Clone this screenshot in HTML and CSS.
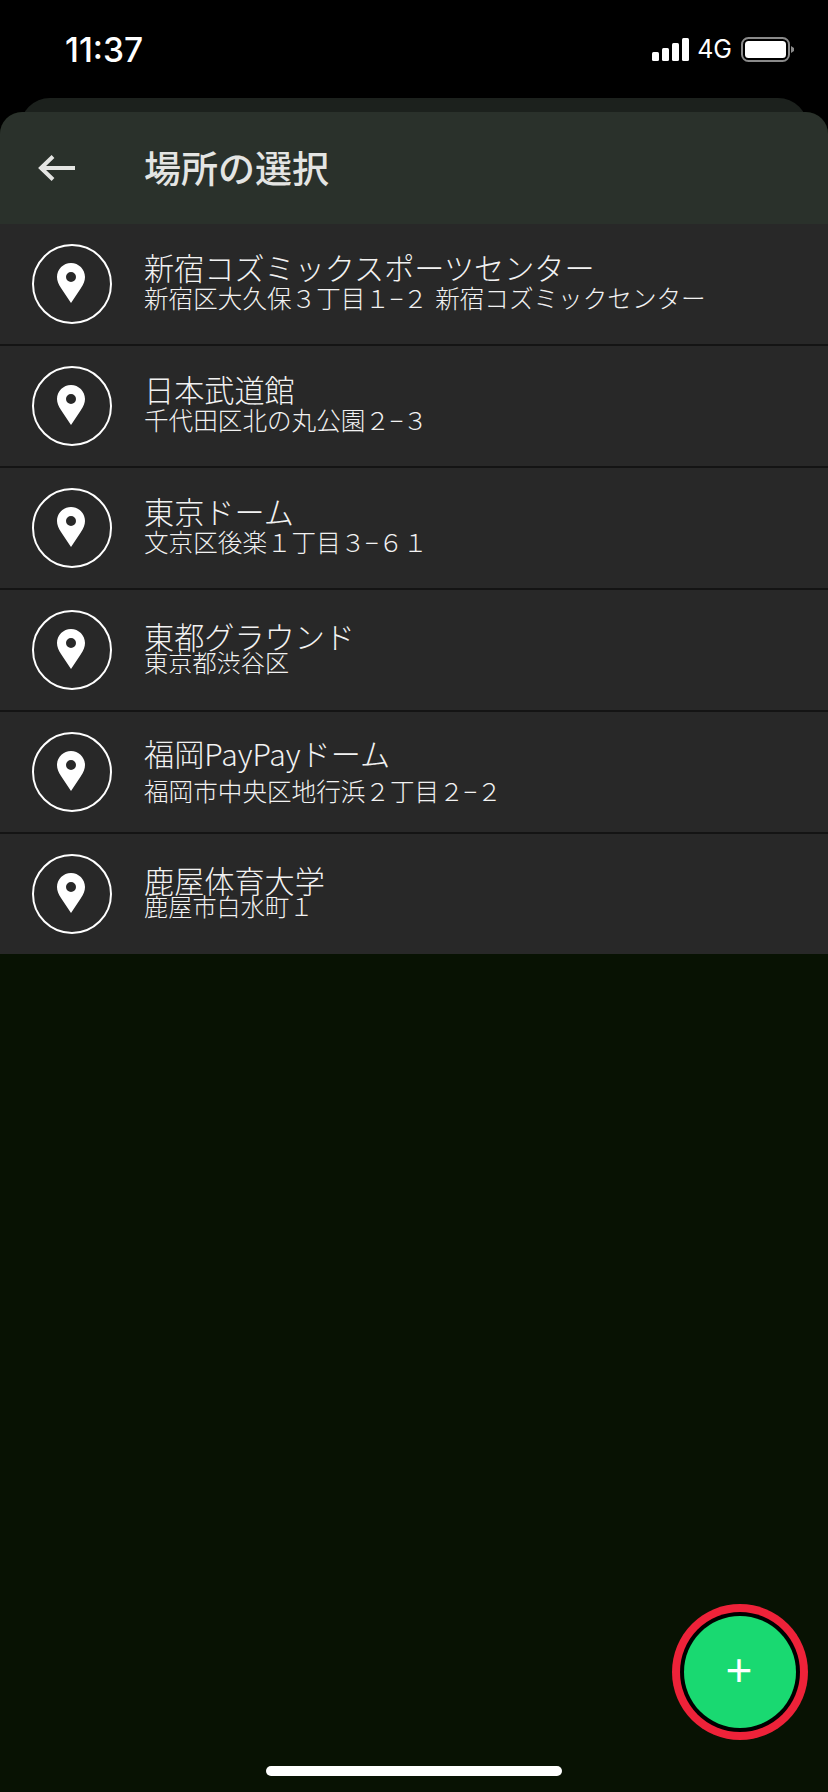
FILE: index.html
```html
<!DOCTYPE html>
<html lang="ja">
<head>
<meta charset="utf-8">
<title>場所の選択</title>
<link rel="stylesheet" href="styles.css">
</head>
<body>
<div class="screen">
  <div class="status">
    <span class="time">11:37</span>
    <div class="status-right">
      <svg class="signal" width="37" height="23" viewBox="0 0 37 23"><rect x="0" y="14" width="7" height="9" rx="1.5"/><rect x="10" y="10" width="7" height="13" rx="1.5"/><rect x="20" y="5" width="7" height="18" rx="1.5"/><rect x="30" y="0" width="7" height="23" rx="1.5"/></svg>
      <span class="net">4G</span>
      <svg class="battery" width="53" height="25" viewBox="0 0 53 25"><rect x="1" y="1" width="47" height="23" rx="6.5" fill="none" stroke="#8a8a8a" stroke-width="2"/><rect x="4" y="4" width="41" height="17" rx="3.5" fill="#fff"/><path d="M50 9 L53 11 V14 L50 16 Z" fill="#8a8a8a"/></svg>
    </div>
  </div>
  <div class="sheet-back">
    <div class="sheet">
      <header class="bar">
        <svg class="back" width="38" height="28" viewBox="0 0 38 28"><path d="M37 14H3M15 2.500 3 14l12 11.500" fill="none" stroke="#e4e5e3" stroke-width="4"/></svg>
        <h1 class="title">場所の選択</h1>
      </header>
      <ul class="list">
        <li class="row"><span class="pin"><svg width="30" height="40" viewBox="0 0 30 40"><path fill-rule="evenodd" d="M15 0C7.300 0 1 6.300 1 14c0 4 1.500 7 4 11l10 15 10-15c2.500-4 4-7 4-11C29 6.300 22.700 0 15 0Zm0 9a5 5 0 1 1 0 10 5 5 0 0 1 0-10Z" fill="#fff"/></svg></span><div class="info"><div class="name">新宿コズミックスポーツセンター</div><div class="addr">新宿区大久保３丁目１−２ 新宿コズミックセンター</div></div></li>
        <li class="row"><span class="pin"><svg width="30" height="40" viewBox="0 0 30 40"><path fill-rule="evenodd" d="M15 0C7.300 0 1 6.300 1 14c0 4 1.500 7 4 11l10 15 10-15c2.500-4 4-7 4-11C29 6.300 22.700 0 15 0Zm0 9a5 5 0 1 1 0 10 5 5 0 0 1 0-10Z" fill="#fff"/></svg></span><div class="info"><div class="name">日本武道館</div><div class="addr">千代田区北の丸公園２−３</div></div></li>
        <li class="row"><span class="pin"><svg width="30" height="40" viewBox="0 0 30 40"><path fill-rule="evenodd" d="M15 0C7.300 0 1 6.300 1 14c0 4 1.500 7 4 11l10 15 10-15c2.500-4 4-7 4-11C29 6.300 22.700 0 15 0Zm0 9a5 5 0 1 1 0 10 5 5 0 0 1 0-10Z" fill="#fff"/></svg></span><div class="info"><div class="name">東京ドーム</div><div class="addr">文京区後楽１丁目３−６１</div></div></li>
        <li class="row"><span class="pin"><svg width="30" height="40" viewBox="0 0 30 40"><path fill-rule="evenodd" d="M15 0C7.300 0 1 6.300 1 14c0 4 1.500 7 4 11l10 15 10-15c2.500-4 4-7 4-11C29 6.300 22.700 0 15 0Zm0 9a5 5 0 1 1 0 10 5 5 0 0 1 0-10Z" fill="#fff"/></svg></span><div class="info info-tight"><div class="name">東都グラウンド</div><div class="addr">東京都渋谷区</div></div></li>
        <li class="row"><span class="pin"><svg width="30" height="40" viewBox="0 0 30 40"><path fill-rule="evenodd" d="M15 0C7.300 0 1 6.300 1 14c0 4 1.500 7 4 11l10 15 10-15c2.500-4 4-7 4-11C29 6.300 22.700 0 15 0Zm0 9a5 5 0 1 1 0 10 5 5 0 0 1 0-10Z" fill="#fff"/></svg></span><div class="info info-wide"><div class="name">福岡PayPayドーム</div><div class="addr">福岡市中央区地行浜２丁目２−２</div></div></li>
        <li class="row"><span class="pin"><svg width="30" height="40" viewBox="0 0 30 40"><path fill-rule="evenodd" d="M15 0C7.300 0 1 6.300 1 14c0 4 1.500 7 4 11l10 15 10-15c2.500-4 4-7 4-11C29 6.300 22.700 0 15 0Zm0 9a5 5 0 1 1 0 10 5 5 0 0 1 0-10Z" fill="#fff"/></svg></span><div class="info info-tight"><div class="name">鹿屋体育大学</div><div class="addr">鹿屋市白水町１</div></div></li>
      </ul>
      <div class="empty">
        <button class="fab" type="button"><span class="fab-plus">+</span></button>
        <div class="home"></div>
      </div>
    </div>
  </div>
</div>
</body>
</html>
```
FILE: styles.css
```css
* { box-sizing: border-box; }
html, body { margin: 0; padding: 0; background: #000; }
body { font-family: "Noto Sans CJK JP", "Noto Sans", sans-serif; }
.screen { width: 828px; height: 1792px; display: flex; flex-direction: column; overflow: hidden; background: #000; }
.status { height: 98px; flex: none; display: flex; justify-content: space-between; align-items: flex-start; padding: 30px 34px 0 65px; color: #fff; }
.time { font-family: Inter, Roboto, sans-serif; font-size: 33.500px; font-weight: 500; line-height: 40px; }
.status-right { display: flex; align-items: center; gap: 8px; padding-top: 4px; }
.net { font-family: Inter, Roboto, sans-serif; font-size: 25px; line-height: 30px; margin-right: 1px; }
.signal rect { fill: #fff; }
.sheet-back { flex: 1; margin: 0 20px; background: #1c211d; border-radius: 30px 30px 0 0; padding-top: 14px; display: flex; }
.sheet { flex: none; width: 828px; margin: 0 -20px; border-radius: 22px 22px 0 0; overflow: hidden; display: flex; flex-direction: column; background: #081203; }
.bar { height: 112px; flex: none; background: #2a312b; display: flex; align-items: center; padding: 0 0 2px 38px; gap: 68px; }
.back { display: block; margin-top: 2px; }
.title { margin: 0; font-size: 37px; font-weight: 500; line-height: 48px; color: #e4e5e3; }
.list { list-style: none; margin: 0; padding: 0; flex: none; display: flex; flex-direction: column; gap: 2px; background: #141414; }
.row { height: 120px; background: #282828; display: flex; align-items: center; padding-left: 32px; gap: 32px; color: #f2f2f2; }
.pin { width: 80px; height: 80px; flex: none; border: 2px solid #fff; border-radius: 50%; display: flex; align-items: center; justify-content: center; padding: 0 2px 2px 0; }
.pin svg { display: block; }
.info { display: flex; flex-direction: column; padding-bottom: 6px; }
.name { font-size: 30.150px; line-height: 32px; font-weight: 300; }
.addr { font-size: 24.600px; line-height: 28px; font-weight: 300; word-spacing: 2px; }
.info-tight { padding-bottom: 4px; }
.info-tight .name { margin-bottom: -4px; }
.info-tight .addr { font-size: 24.200px; }
.info-wide { padding-bottom: 3px; }
.info-wide .name { margin-bottom: 7px; }
.empty { flex: 1; position: relative; }
.fab { position: absolute; left: 684px; top: 662px; width: 112px; height: 112px; border-radius: 50%; border: 0; background: #19d971; box-shadow: 0 0 0 4px #000, 0 0 0 12px #ee2239; padding: 0 2px 4px 0; color: #fff; display: flex; align-items: center; justify-content: center; }
.fab-plus { font-family: "Liberation Sans", sans-serif; font-size: 46px; line-height: 46px; }
.home { position: absolute; left: 266px; bottom: 16px; width: 296px; height: 10px; border-radius: 5px; background: #fff; }
```
